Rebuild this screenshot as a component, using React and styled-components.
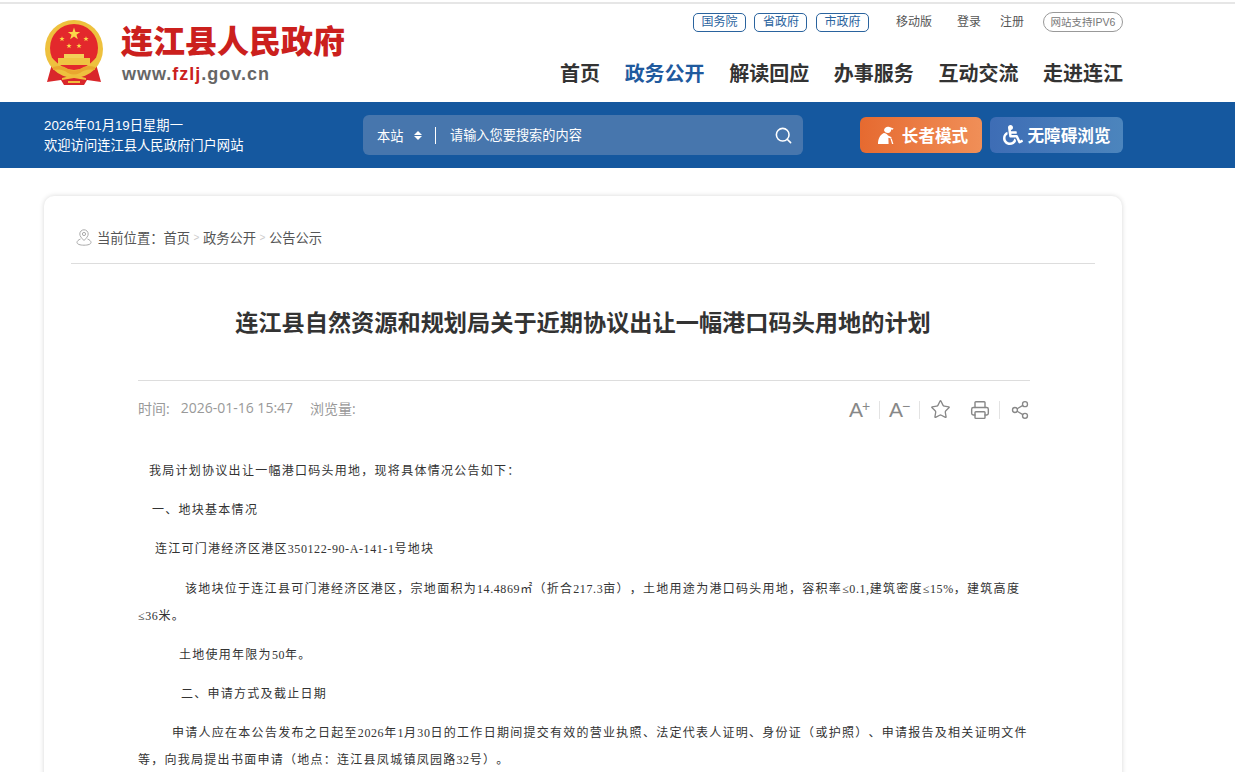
import styled, { createGlobalStyle } from "styled-components";
import { Search, Star, Printer, Share2 } from "lucide-react";
import { FaWheelchair } from "react-icons/fa";

const SANS = `"Liberation Sans", "Noto Sans CJK SC", sans-serif`;
const ROBOTO = `"Open Sans", "Noto Sans CJK SC", sans-serif`;
const SERIF = `"Liberation Serif", "Noto Sans CJK SC", serif`;

const GlobalStyle = createGlobalStyle`
  html, body {
    margin: 0;
    padding: 0;
    height: 772px;
    overflow: hidden;
    background: #fff;
    font-family: ${SANS};
  }
`;

const Star5 = ({ cx, cy, r }) => {
  const pts = [];
  for (let i = 0; i < 10; i++) {
    const rad = i % 2 === 0 ? r : r * 0.4;
    const a = (Math.PI / 5) * i - Math.PI / 2;
    pts.push(`${cx + rad * Math.cos(a)},${cy + rad * Math.sin(a)}`);
  }
  return <polygon points={pts.join(" ")} fill="#fbd84a" />;
};

const Emblem = () => (
  <svg width="60" height="66" viewBox="0 0 60 66">
    <path d="M8 44 L3 62 L17 60 L20 65 L40 65 L43 60 L57 62 L52 44 Z" fill="#d9272b" />
    <circle cx="30" cy="29" r="29" fill="#eec13e" />
    <circle cx="30" cy="28" r="24" fill="#e3282c" />
    <path d="M8 38 Q30 62 52 38 L55 42 Q30 68 5 42 Z" fill="#eec13e" />
    <Star5 cx={30} cy={14} r={6.5} />
    <Star5 cx={18} cy={19} r={2.8} />
    <Star5 cx={42} cy={19} r={2.8} />
    <Star5 cx={25} cy={26} r={2.8} />
    <Star5 cx={35} cy={26} r={2.8} />
    <rect x="20" y="34" width="20" height="4" fill="#f3cf58" />
    <rect x="14" y="38" width="32" height="7" fill="#efc443" />
    <path d="M9 47 Q18 44 24 49 Q30 52 36 49 Q42 44 51 47 L51 50 Q42 48 36 53 Q30 56 24 53 Q18 48 9 50 Z" fill="#e9a72f" />
    <path d="M18 58 L30 55 L42 58 L42 60 L30 58 L18 60 Z" fill="#f0bd3c" />
    <rect x="24" y="61" width="12" height="2" fill="#f0bd3c" />
  </svg>
);

const PinIcon = () => (
  <svg width="16" height="17" viewBox="0 0 16 17" fill="none" stroke="#aaa" strokeWidth="1">
    <path d="M8 11.5 C5.5 9 3.8 7.2 3.8 5 A4.2 4.2 0 0 1 12.2 5 C12.2 7.2 10.5 9 8 11.5 Z" />
    <circle cx="8" cy="5" r="1.6" />
    <path d="M4.5 10 C2.5 10.8 1 12 1 13.5 C1 15.2 4 16.2 8 16.2 C12 16.2 15 15.2 15 13.5 C15 12 13.5 10.8 11.5 10" />
  </svg>
);

const ElderIcon = () => (
  <svg width="18" height="18" viewBox="0 0 18 18" fill="#fff">
    <path d="M7 4.2 C7.4 1.6 10 0 12.4 1 L16.6 2.6 L15.6 3.8 L14.2 3.6 C14.2 5.8 12.6 7.2 10.8 7 C8.8 6.8 7.4 5.8 7 4.2 Z" />
    <path d="M6.4 7.2 C8 6.8 10 8 11 9.6 L14.6 11.2 L13.9 12.6 L11.4 11.8 L11.6 18 L1 18 C0.8 13.6 3 8.6 6.4 7.2 Z" />
    <path d="M13.4 12.6 L14.7 12.6 L16.4 18 L15 18 Z" />
  </svg>
);

const App = () => {
  return <>
    <GlobalStyle/>
    <Page>
      <Header>
        <Brand>
          <Emblem/>
          <BrandText>
            <BrandName>连江县人民政府</BrandName>
            <BrandUrl>www.<em>fzlj</em>.gov.cn</BrandUrl>
          </BrandText>
        </Brand>
        <HeaderRight>
          <TopLinks>
            <GovLink>国务院</GovLink>
            <GovLink>省政府</GovLink>
            <GovLink>市政府</GovLink>
            <PlainLink $left={27}>移动版</PlainLink>
            <PlainLink $left={25}>登录</PlainLink>
            <PlainLink $left={19}>注册</PlainLink>
            <Ipv6>网站支持IPV6</Ipv6>
          </TopLinks>
          <Nav>
            <NavItem>首页</NavItem>
            <NavItem $active>政务公开</NavItem>
            <NavItem>解读回应</NavItem>
            <NavItem>办事服务</NavItem>
            <NavItem>互动交流</NavItem>
            <NavItem>走进连江</NavItem>
          </Nav>
        </HeaderRight>
      </Header>

      <BlueBar>
        <Greeting>
          <div>2026年01月19日星期一</div>
          <div>欢迎访问连江县人民政府门户网站</div>
        </Greeting>
        <SearchBox>
          <ScopeSelect>本站<ScopeArrows><i/><b/></ScopeArrows></ScopeSelect>
          <SearchDivider/>
          <SearchHint>请输入您要搜索的内容</SearchHint>
          <Search size={19} strokeWidth={2} color="#fff"/>
        </SearchBox>
        <ModeButtons>
          <ModeButton $from="#e66a30" $to="#f08f58" $width={122} $gap={7} $left={3}>
            <ElderIcon/>长者模式
          </ModeButton>
          <ModeButton $from="#3e6db5" $to="#4c85bd" $width={133} $gap={5} $left={0}>
            <FaWheelchair size={20}/>无障碍浏览
          </ModeButton>
        </ModeButtons>
      </BlueBar>

      <Card>
        <Crumbs>
          <PinIcon/>
          <CrumbLabel>当前位置：</CrumbLabel>
          <span>首页</span><CrumbSep>&gt;</CrumbSep>
          <span>政务公开</span><CrumbSep>&gt;</CrumbSep>
          <span>公告公示</span>
        </Crumbs>
        <Title>连江县自然资源和规划局关于近期协议出让一幅港口码头用地的计划</Title>
        <Article>
          <MetaRow>
            <MetaText>
              <span>时间:</span>
              <span>2026-01-16 15:47</span>
              <span>浏览量:</span>
            </MetaText>
            <Tools>
              <Tool $divider><FontGlyph>A<sup>+</sup></FontGlyph></Tool>
              <Tool $divider><FontGlyph>A<sup>−</sup></FontGlyph></Tool>
              <Tool><Star size={21} strokeWidth={1.5}/></Tool>
              <Tool $divider><Printer size={20} strokeWidth={1.7}/></Tool>
              <Tool><Share2 size={20} strokeWidth={1.6}/></Tool>
            </Tools>
          </MetaRow>
          <Paragraph $indent={11}>我局计划协议出让一幅港口码头用地，现将具体情况公告如下：</Paragraph>
          <Paragraph $indent={14}>一、地块基本情况</Paragraph>
          <Paragraph $indent={17}>连江可门港经济区港区<Num>350122-90-A-141-1</Num>号地块</Paragraph>
          <Paragraph $indent={47}>该地块位于连江县可门港经济区港区，宗地面积为<Num>14.4869</Num>㎡（折合<Num>217.3</Num>亩），土地用途为港口码头用地，容积率<Num>≤0.1,</Num>建筑密度<Num>≤15%</Num>，建筑高度<Num>≤36</Num>米。</Paragraph>
          <Paragraph $indent={41}>土地使用年限为<Num>50</Num>年。</Paragraph>
          <Paragraph $indent={43}>二、申请方式及截止日期</Paragraph>
          <Paragraph $indent={34}>申请人应在本公告发布之日起至<Num>2026</Num>年<Num>1</Num>月<Num>30</Num>日的工作日期间提交有效的营业执照、法定代表人证明、身份证（或护照）、申请报告及相关证明文件等，向我局提出书面申请（地点：连江县凤城镇凤园路<Num>32</Num>号）。</Paragraph>
        </Article>
      </Card>
    </Page>
  </>
}

const Page = styled.div`
  height: 772px;
  overflow: hidden;
  border-top: 2px solid #e6e6e6;
  margin-top: 2px;
`

const Header = styled.header`
  width: 1079px;
  height: 98px;
  margin-left: 44px;
  display: flex;
  justify-content: space-between;
`

const Brand = styled.div`
  display: flex;
  align-items: flex-start;
  gap: 17px;
  padding-top: 16px;
`

const BrandText = styled.div`
  display: flex;
  flex-direction: column;
`

const BrandName = styled.div`
  font-family: "Noto Sans CJK SC", sans-serif;
  font-size: 32px;
  font-weight: 900;
  line-height: 38px;
  color: #cb201d;
`

const BrandUrl = styled.div`
  font-family: "Liberation Sans", sans-serif;
  font-size: 18px;
  font-weight: 700;
  line-height: 22px;
  margin: 5px 0 0 1px;
  letter-spacing: 1px;
  color: #666;

  em {
    font-style: normal;
    color: #cb201d;
  }
`

const HeaderRight = styled.div`
  display: flex;
  flex-direction: column;
  align-items: flex-end;
`

const TopLinks = styled.div`
  display: flex;
  align-items: center;
  height: 20px;
  margin-top: 8px;
  font-size: 12px;
`

const GovLink = styled.a`
  box-sizing: border-box;
  width: 53px;
  height: 19px;
  margin-right: 8.5px;
  border: 1px solid #2a639e;
  border-radius: 5px;
  color: #2a639e;
  line-height: 17px;
  text-align: center;

  &:nth-child(3) {
    margin-right: 0;
  }
`

const PlainLink = styled.a`
  margin-left: ${p => p.$left}px;
  color: #555;
  line-height: 20px;
`

const Ipv6 = styled.span`
  box-sizing: border-box;
  width: 80px;
  height: 20px;
  margin-left: 19px;
  border: 1px solid #999;
  border-radius: 10px;
  color: #777;
  font-size: 10.5px;
  line-height: 18px;
  text-align: center;
  white-space: nowrap;
`

const Nav = styled.nav`
  display: flex;
  gap: 24.6px;
  margin-top: 26px;
`

const NavItem = styled.a`
  font-family: "Noto Sans CJK SC", sans-serif;
  font-size: 20px;
  font-weight: 700;
  line-height: 30px;
  color: ${p => p.$active ? "#1f5a9e" : "#333"};
`

const BlueBar = styled.div`
  height: 66px;
  padding-left: 44px;
  display: flex;
  align-items: center;
  background: #15589f;
`

const Greeting = styled.div`
  width: 319px;
  padding-top: 2px;
  font-size: 13.3px;
  line-height: 20px;
  color: #fff;
`

const SearchBox = styled.div`
  box-sizing: border-box;
  width: 440px;
  height: 40px;
  padding: 0 10px 0 14px;
  display: flex;
  align-items: center;
  border-radius: 6px;
  background: #4776ad;
  color: #fff;
  font-size: 13.2px;
`

const ScopeSelect = styled.div`
  width: 58px;
  display: flex;
  align-items: center;
  gap: 11px;
`

const ScopeArrows = styled.span`
  display: flex;
  flex-direction: column;
  gap: 1px;

  i, b {
    width: 0;
    height: 0;
    border-left: 4px solid transparent;
    border-right: 4px solid transparent;
  }
  i { border-bottom: 4.5px solid #fff; }
  b { border-top: 4.5px solid #fff; }
`

const SearchDivider = styled.span`
  width: 1px;
  height: 17px;
  background: #fff;
`

const SearchHint = styled.span`
  flex: 1;
  margin: -2px 0 0 14px;
`

const ModeButtons = styled.div`
  display: flex;
  gap: 8px;
  margin-left: 57px;
`

const ModeButton = styled.a`
  box-sizing: border-box;
  width: ${p => p.$width}px;
  height: 36px;
  padding-left: ${p => p.$left}px;
  display: flex;
  align-items: center;
  justify-content: center;
  gap: ${p => p.$gap}px;
  border-radius: 6px;
  background: linear-gradient(90deg, ${p => p.$from}, ${p => p.$to});
  color: #fff;
  font-family: "Noto Sans CJK SC", sans-serif;
  font-size: 16.6px;
  font-weight: 700;
`

const Card = styled.main`
  box-sizing: border-box;
  width: 1078px;
  height: 900px;
  margin: 28px 0 0 44px;
  padding: 0 27px;
  border-radius: 10px;
  background: #fff;
  box-shadow: 0 0 5px rgba(0, 0, 0, 0.16);
`

const Crumbs = styled.div`
  box-sizing: border-box;
  height: 68px;
  padding: 15px 0 0 5px;
  display: flex;
  align-items: center;
  border-bottom: 1px solid #ddd;
  font-size: 13.3px;
  color: #555;
`

const CrumbLabel = styled.span`
  margin-left: 5px;
`

const CrumbSep = styled.span`
  margin: 0 3.5px;
  color: #ccc;
  font-size: 10px;
`

const Title = styled.h1`
  margin: 0;
  height: 116px;
  font-family: "Noto Sans CJK SC", sans-serif;
  font-size: 23.2px;
  font-weight: 700;
  line-height: 114px;
  text-align: center;
  color: #333;
`

const Article = styled.article`
  width: 892px;
  margin-left: 67px;
  border-top: 1px solid #ddd;
`

const MetaRow = styled.div`
  height: 54px;
  margin-bottom: 23px;
  display: flex;
  align-items: center;
  justify-content: space-between;
`

const MetaText = styled.div`
  display: flex;
  font-family: ${ROBOTO};
  font-size: 14px;
  color: #999;

  span:nth-child(2) { margin-left: 11px; }
  span:nth-child(3) { margin-left: 17px; }
`

const Tools = styled.div`
  display: flex;
  align-items: center;
  padding-top: 3px;
  color: #888;
`

const Tool = styled.span`
  box-sizing: border-box;
  width: 40px;
  height: 18px;
  display: flex;
  align-items: center;
  justify-content: center;
  border-right: ${p => p.$divider ? "1px solid #e3e3e3" : "0"};

  &:last-child {
    width: 30px;
    justify-content: flex-end;
  }
`

const FontGlyph = styled.span`
  font-family: "Liberation Sans", sans-serif;
  font-size: 21px;
  line-height: 20px;
  color: #888;

  sup {
    font-size: 14px;
    line-height: 0;
    vertical-align: 6px;
    margin-left: -1px;
  }
`

const Paragraph = styled.p`
  margin: 0 0 12.2px;
  font-family: ${SERIF};
  font-size: 12px;
  line-height: 27px;
  letter-spacing: 1.27px;
  text-spacing-trim: space-all;
  color: #333;
  text-indent: ${p => p.$indent}px;
`

const Num = styled.span`
  letter-spacing: 0.6px;
`

export default App;
